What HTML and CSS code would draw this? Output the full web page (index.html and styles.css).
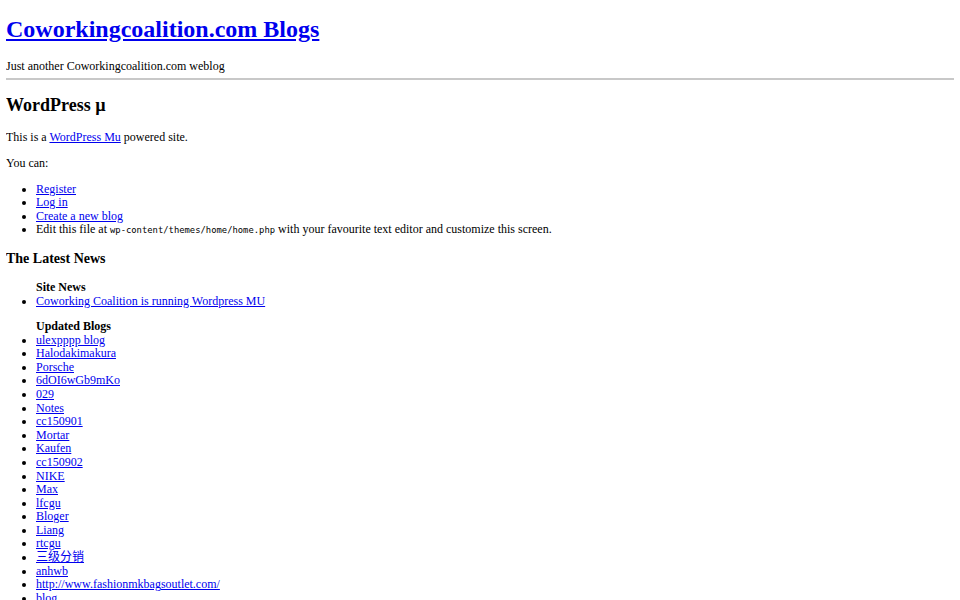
FILE: index.html
```html
<!DOCTYPE html>
<html lang="en">
<head>
<meta charset="utf-8">
<title>Coworkingcoalition.com Blogs</title>
<link rel="stylesheet" href="styles.css">
</head>
<body>
<div class="header">
  <h1 class="site-title"><a href="#">Coworkingcoalition.com Blogs</a></h1>
  <div class="description">Just another Coworkingcoalition.com weblog</div>
</div>
<hr class="rule">
<div class="content">
  <h2 class="page-title">WordPress µ</h2>
  <p class="para">This is a <a href="#">WordPress Mu</a> powered site.</p>
  <p class="para">You can:</p>
  <ul class="list">
    <li><a href="#">Register</a></li>
    <li><a href="#">Log in</a></li>
    <li><a href="#">Create a new blog</a></li>
    <li>Edit this file at <code class="code">wp-content/themes/home/home.php</code> with your favourite text editor and customize this screen.</li>
  </ul>
  <h3 class="section-title">The Latest News</h3>
  <ul class="list">
    <li class="list-head">Site News</li>
    <li><a href="#">Coworking Coalition is running Wordpress MU</a></li>
  </ul>
  <ul class="list">
    <li class="list-head">Updated Blogs</li>
    <li><a href="#">ulexpppp blog</a></li>
    <li><a href="#">Halodakimakura</a></li>
    <li><a href="#">Porsche</a></li>
    <li><a href="#">6dOI6wGb9mKo</a></li>
    <li><a href="#">029</a></li>
    <li><a href="#">Notes</a></li>
    <li><a href="#">cc150901</a></li>
    <li><a href="#">Mortar</a></li>
    <li><a href="#">Kaufen</a></li>
    <li><a href="#">cc150902</a></li>
    <li><a href="#">NIKE</a></li>
    <li><a href="#">Max</a></li>
    <li><a href="#">lfcgu</a></li>
    <li><a href="#">Bloger</a></li>
    <li><a href="#">Liang</a></li>
    <li><a href="#">rtcgu</a></li>
    <li><a href="#" class="cjk">三级分销</a></li>
    <li><a href="#">anhwb</a></li>
    <li><a href="#">http://www.fashionmkbagsoutlet.com/</a></li>
    <li><a href="#">blog</a></li>
    <li><a href="#">news</a></li>
    <li><a href="#">home</a></li>
  </ul>
</div>
</body>
</html>
```
FILE: styles.css
```css
html {
  background: #ffffff;
}
body {
  margin: 6px;
  font-family: "Liberation Serif", "Times New Roman", serif;
  font-size: 12px;
  line-height: 13.8px;
  color: #000000;
}
a {
  color: #0000ee;
  text-decoration: underline;
}
.site-title {
  font-size: 24px;
  line-height: 27.6px;
  font-weight: bold;
  margin: 10px 0 16px;
}
.description {
  font-size: 12px;
}
.rule {
  margin: 5px 0 6px;
  border: 0;
  height: 2px;
  background: #c8c8c8;
}
.page-title {
  font-size: 18px;
  line-height: 20.7px;
  font-weight: bold;
  margin: 15px 0;
}
.para {
  margin: 12px 0;
}
.section-title {
  font-size: 14px;
  line-height: 15px;
  font-weight: bold;
  margin: 13px 0 15px;
}
.list {
  margin: 11px 0 12px;
  padding-left: 30px;
  list-style: disc;
}
.list li {
  line-height: 13.58px;
}
.list .list-head {
  list-style: none;
  font-weight: bold;
}
.code {
  font-family: "DejaVu Sans Mono", "Liberation Mono", monospace;
  font-size: 8.85px;
}
.cjk {
  font-family: "Liberation Serif", "Noto Sans CJK SC", sans-serif;
}
```
